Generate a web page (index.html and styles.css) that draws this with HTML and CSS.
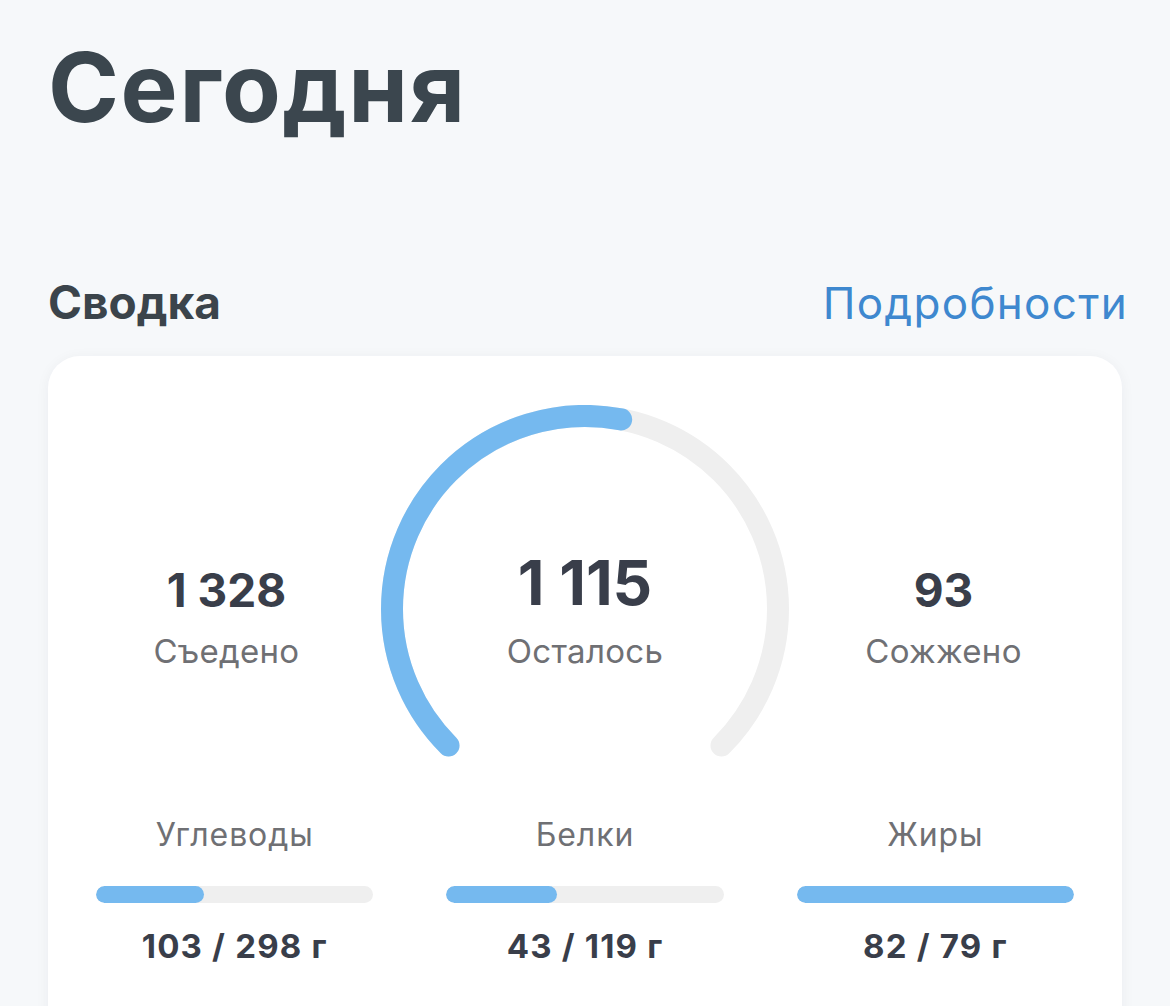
FILE: index.html
```html
<!DOCTYPE html>
<html lang="ru">
<head>
<meta charset="utf-8">
<title>Сегодня</title>
<link rel="stylesheet" href="styles.css">
</head>
<body>
<main class="page">
  <h1 class="title">Сегодня</h1>
  <div class="section-head">
    <h2 class="section-title">Сводка</h2>
    <a class="section-link" href="#">Подробности</a>
  </div>
  <section class="card">
    <div class="summary">
      <div class="stat">
        <div class="stat-value">1 328</div>
        <div class="stat-label">Съедено</div>
      </div>
      <div class="gauge">
        <svg class="gauge-svg" width="408" height="352" viewBox="0 0 408 352">
          <path class="gauge-track" d="M 67.53 340.47 A 193 193 0 1 1 340.47 340.47" pathLength="100"/>
          <path class="gauge-fill" d="M 67.53 340.47 A 193 193 0 1 1 340.47 340.47" pathLength="100" stroke-dasharray="54 200"/>
        </svg>
        <div class="gauge-center">
          <div class="gauge-value">1 115</div>
          <div class="stat-label">Осталось</div>
        </div>
      </div>
      <div class="stat">
        <div class="stat-value">93</div>
        <div class="stat-label">Сожжено</div>
      </div>
    </div>
    <div class="macros">
      <div class="macro">
        <div class="macro-label">Углеводы</div>
        <div class="bar"><div class="bar-fill" style="width:39%"></div></div>
        <div class="macro-value">103 / 298 г</div>
      </div>
      <div class="macro">
        <div class="macro-label">Белки</div>
        <div class="bar"><div class="bar-fill" style="width:40%"></div></div>
        <div class="macro-value">43 / 119 г</div>
      </div>
      <div class="macro">
        <div class="macro-label">Жиры</div>
        <div class="bar"><div class="bar-fill" style="width:100%"></div></div>
        <div class="macro-value">82 / 79 г</div>
      </div>
    </div>
  </section>
</main>
</body>
</html>
```

FILE: styles.css
```css
html, body {
  margin: 0;
  padding: 0;
  background: #f6f8fa;
}

body {
  font-family: "Inter", "Roboto", "Noto Sans", sans-serif;
  color: #3a424a;
}

.page {
  padding: 39px 48px 0;
}

.title {
  margin: 0;
  font-size: 96px;
  line-height: 96px;
  font-weight: 700;
  color: #3b464e;
  letter-spacing: 1.6px;
}

.section-head {
  display: flex;
  justify-content: space-between;
  align-items: baseline;
  margin-top: 139px;
}

.section-title {
  margin: 0;
  font-size: 46px;
  line-height: 56px;
  font-weight: 700;
  color: #3b444b;
}

.section-link {
  margin-right: -6px;
  font-size: 44px;
  line-height: 56px;
  font-weight: 400;
  letter-spacing: 1.3px;
  color: #3e88cf;
  text-decoration: none;
}

.card {
  margin-top: 25px;
  background: #ffffff;
  border-radius: 32px;
  box-shadow: 0 2px 14px rgba(20, 40, 60, 0.05);
  padding: 49px 24px 80px;
}

.summary {
  display: grid;
  grid-template-columns: 1fr 408px 1fr;
}

.stat {
  display: flex;
  flex-direction: column;
  align-items: center;
  padding-top: 157px;
}

.stat-value {
  font-size: 46px;
  line-height: 56px;
  font-weight: 700;
  color: #393e4a;
  white-space: nowrap;
}

.stat-label {
  margin-top: 13px;
  font-size: 33px;
  line-height: 40px;
  letter-spacing: 0.3px;
  color: #6f7074;
}

.gauge {
  position: relative;
  height: 352px;
}

.gauge-svg {
  display: block;
}

.gauge-track,
.gauge-fill {
  fill: none;
  stroke-width: 22;
  stroke-linecap: round;
}

.gauge-track {
  stroke: #efefef;
}

.gauge-fill {
  stroke: #75b9ef;
}

.gauge-center {
  position: absolute;
  top: 142px;
  left: 0;
  right: 0;
  display: flex;
  flex-direction: column;
  align-items: center;
}

.gauge-value {
  font-size: 62px;
  line-height: 72px;
  font-weight: 700;
  color: #393e4a;
  white-space: nowrap;
}

.gauge-center .stat-label {
  margin-top: 12px;
}

.macros {
  display: grid;
  grid-template-columns: repeat(3, 1fr);
  column-gap: 73px;
  padding: 0 24px;
  margin-top: 58px;
}

.macro {
  display: flex;
  flex-direction: column;
  align-items: center;
}

.macro-label {
  font-size: 32px;
  line-height: 40px;
  letter-spacing: 0.9px;
  color: #6f7074;
}

.bar {
  align-self: stretch;
  margin-top: 31px;
  height: 17px;
  border-radius: 9px;
  background: #efefef;
  overflow: hidden;
}

.bar-fill {
  height: 100%;
  border-radius: 9px;
  background: #75b9ef;
}

.macro-value {
  margin-top: 23px;
  font-size: 33px;
  line-height: 40px;
  font-weight: 700;
  letter-spacing: 1.2px;
  color: #393e4a;
}
```
